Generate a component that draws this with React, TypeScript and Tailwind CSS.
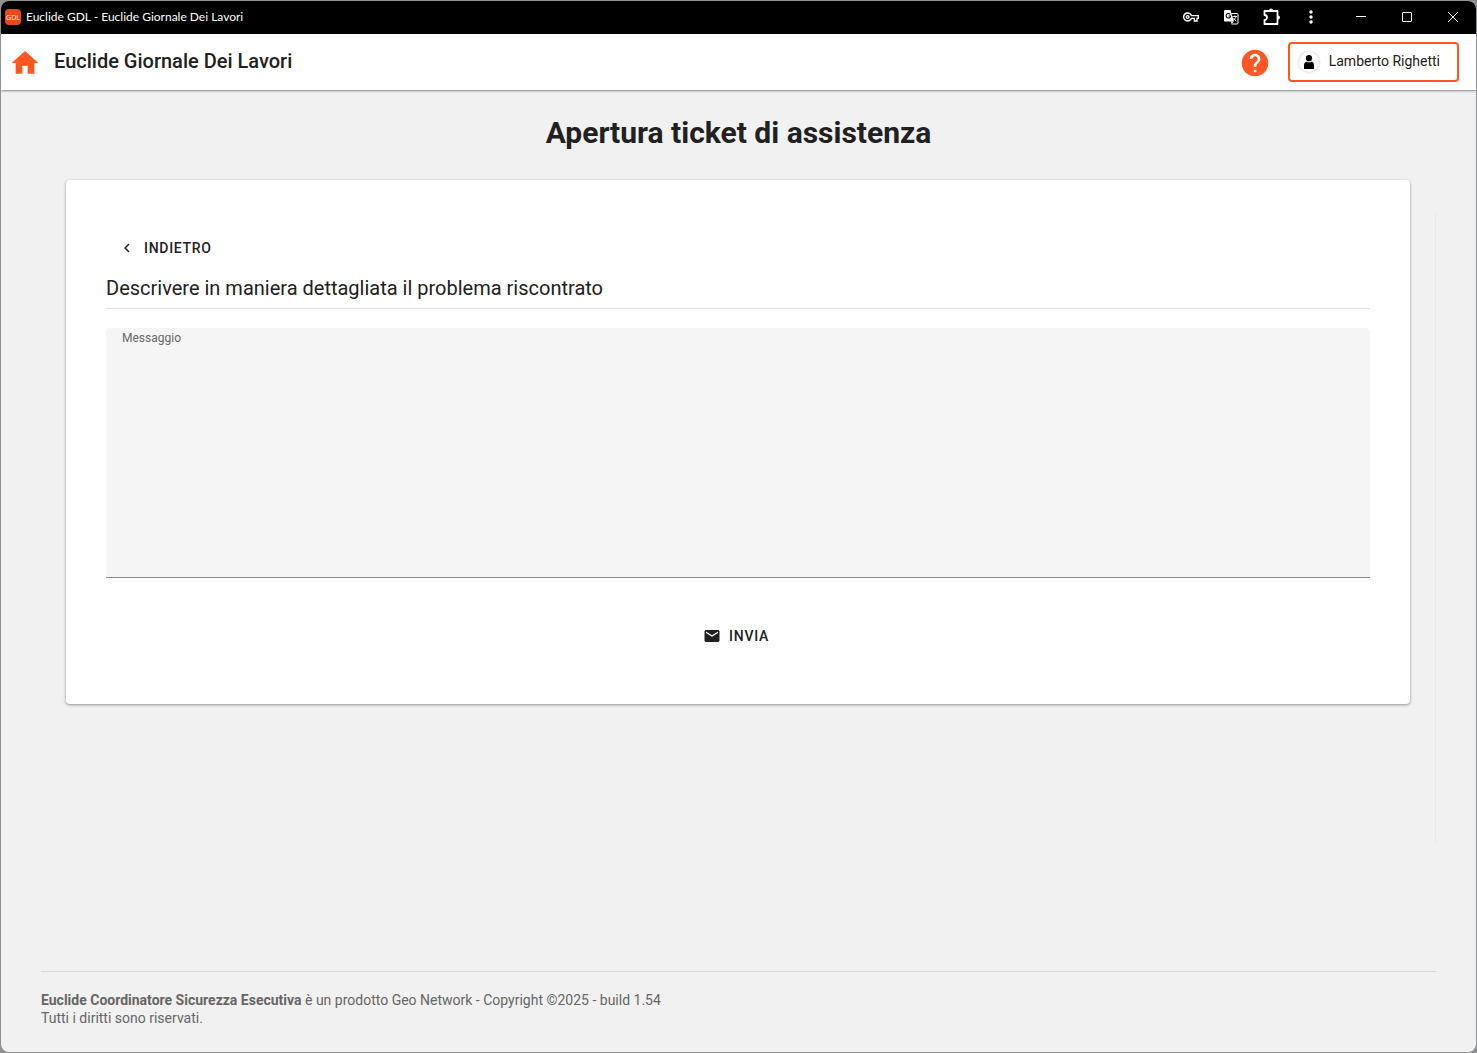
import React from "react";
import {
  MdChevronLeft,
  MdEmail,
  MdHelp,
  MdHome,
  MdMoreVert,
  MdOutlineVpnKey,
} from "react-icons/md";

function AppBadge() {
  return (
    <span className="flex size-4 items-center justify-center rounded-sm bg-[#e64a19] font-['Open_Sans',sans-serif] text-[7px] leading-none text-orange-100">
      GDL
    </span>
  );
}

function PuzzleIcon() {
  return (
    <svg className="size-5" viewBox="0 0 20 20" fill="none" stroke="currentColor" strokeWidth="1.8">
      <path strokeLinejoin="round" d="M3.500 4h13v13h-13v-4a2.300 2.300 0 0 0 0-5z" />
      <path d="M8 3.600a2 2 0 0 1 4 0zM17 8.500a2 2 0 0 1 0 4z" fill="currentColor" stroke="none" />
    </svg>
  );
}

function TranslateIcon() {
  return (
    <svg className="size-4" viewBox="0 0 16 16" fill="none">
      <path d="M8.500 4.500H14a1 1 0 0 1 1 1V14a1 1 0 0 1-1 1H8.500" stroke="currentColor" />
      <path d="M9.500 7.500h4.500M11.700 6.500v1M13 7.500c-.4 1.700-1.500 3-3 4M10.500 9c.6 1.200 1.600 2.200 2.800 3" stroke="currentColor" strokeWidth="0.9" />
      <path d="M2 1h5.500l3.300 11.500H2a1 1 0 0 1-1-1V2a1 1 0 0 1 1-1z" fill="currentColor" />
      <path d="M8 12.500h2.800L8.500 15z" fill="currentColor" />
      <path d="M7.200 5.300A2.300 2.300 0 1 0 7.700 7H5.500" stroke="black" strokeWidth="1.1" />
    </svg>
  );
}

function TitleBar() {
  return (
    <div className="flex h-[33px] shrink-0 items-center bg-black pb-px pl-1 text-white">
      <AppBadge />
      <span className="ml-[5px] flex-1 truncate font-[Lato,sans-serif] text-xs">
        Euclide GDL - Euclide Giornale Dei Lavori
      </span>
      <div className="mr-[7px] flex items-center">
        <button type="button" aria-label="Password" className="flex w-10 justify-center">
          <MdOutlineVpnKey className="size-4" />
        </button>
        <button type="button" aria-label="Traduci" className="flex w-10 justify-center">
          <TranslateIcon />
        </button>
        <button type="button" aria-label="Estensioni" className="flex w-10 items-center justify-center">
          <PuzzleIcon />
        </button>
        <button type="button" aria-label="Menu" className="flex w-10 items-center justify-center">
          <MdMoreVert className="size-5" />
        </button>
      </div>
      <div className="flex">
        <button type="button" aria-label="Riduci a icona" className="flex w-[46px] justify-center py-2">
          <svg className="size-4" viewBox="0 0 16 16" stroke="currentColor" fill="none">
            <path d="M3 7.5h10" />
          </svg>
        </button>
        <button type="button" aria-label="Ingrandisci" className="flex w-[46px] justify-center py-2">
          <svg className="size-4" viewBox="0 0 16 16" stroke="currentColor" fill="none">
            <rect x="3.5" y="3.5" width="9" height="9" rx="0.5" />
          </svg>
        </button>
        <button type="button" aria-label="Chiudi" className="flex w-[46px] justify-center py-2">
          <svg className="size-4" viewBox="0 0 16 16" stroke="currentColor" fill="none">
            <path d="M3 3l10 10M13 3L3 13" />
          </svg>
        </button>
      </div>
    </div>
  );
}

function Toolbar() {
  return (
    <header className="relative flex h-14 shrink-0 items-center bg-white pr-[17px] pl-2 shadow-[0_1px_2px_rgba(0,0,0,0.45)]">
      <a href="#home" aria-label="Home" className="pt-0.5 text-[#ff5722]">
        <MdHome className="size-8" />
      </a>
      <h1 className="ml-[13px] flex-1 pb-0.5 text-xl font-medium">Euclide Giornale Dei Lavori</h1>
      <button type="button" aria-label="Aiuto" className="pt-0.5 text-[#ff5722]">
        <MdHelp className="size-8" />
      </button>
      <button
        type="button"
        className="ml-[17px] flex h-10 items-center gap-2.5 rounded-[4px] border-2 border-[#ff5722] pr-[17px] pl-[9px] text-sm"
      >
        <span className="flex size-5 items-center justify-center rounded-full bg-white shadow-[0_0_3px_rgba(0,0,0,0.25)]">
          <svg className="size-4" viewBox="0 0 16 16" fill="black">
            <circle cx="8" cy="4.2" r="3.1" />
            <path d="M3 15v-3.500C3 9.300 4 8 5.700 7.800q2.300 1.300 4.600 0C12 8 13 9.300 13 11.500V15z" />
          </svg>
        </span>
        <span className="pb-0.5">Lamberto Righetti</span>
      </button>
    </header>
  );
}

function TicketForm() {
  return (
    <form className="mx-[25px] rounded-[4px] bg-white px-10 pt-[50px] pb-[50px] shadow-[0_1px_3px_rgba(0,0,0,0.4)]">
      <button
        type="button"
        className="flex h-9 items-center gap-2 px-3 text-sm font-medium tracking-wider uppercase"
      >
        <MdChevronLeft className="size-[18px]" />
        Indietro
      </button>
      <h3 className="border-b border-[#e0e0e0] pt-2 pb-1.5 text-xl">
        Descrivere in maniera dettagliata il problema riscontrato
      </h3>
      <div className="mt-[19px] flex h-[250px] flex-col rounded-t-[4px] border-b border-[#8c8c8c] bg-[#f5f5f5] px-4 pt-0.5">
        <label htmlFor="messaggio" className="text-xs text-[#666666]">
          Messaggio
        </label>
        <textarea id="messaggio" className="w-full flex-1 resize-none bg-transparent text-base outline-none" />
      </div>
      <div className="mt-10 flex justify-center">
        <button
          type="submit"
          className="flex h-9 items-center gap-2 pr-3 pl-2 text-sm font-medium tracking-wider uppercase"
        >
          <MdEmail className="size-[18px]" />
          Invia
        </button>
      </div>
    </form>
  );
}

function Footer() {
  return (
    <footer className="mx-10 border-t border-[#d8d8d8] pt-[19px] pb-[25px] text-sm leading-[18px] text-[#666666]">
      <p>
        <strong className="font-bold">Euclide Coordinatore Sicurezza Esecutiva</strong> è un prodotto Geo Network -
        Copyright ©2025 - build 1.54
      </p>
      <p>Tutti i diritti sono riservati.</p>
    </footer>
  );
}

export default function App() {
  return (
    <div className="flex min-h-screen bg-[#8f9193] p-px font-[Roboto,sans-serif] text-[#212121]">
      <div className="flex flex-1 flex-col overflow-hidden rounded-lg bg-[#f1f1f1]">
        <TitleBar />
        <Toolbar />
        <main className="flex flex-1 flex-col px-10">
          <h2 className="pt-[25px] text-center text-3xl font-bold">Apertura ticket di assistenza</h2>
          <div className="mt-[29px] flex min-h-[664px]">
            <section className="flex-1">
              <TicketForm />
            </section>
            <div className="mt-8 w-px bg-[#e9e9e9]" />
          </div>
        </main>
        <Footer />
      </div>
    </div>
  );
}
